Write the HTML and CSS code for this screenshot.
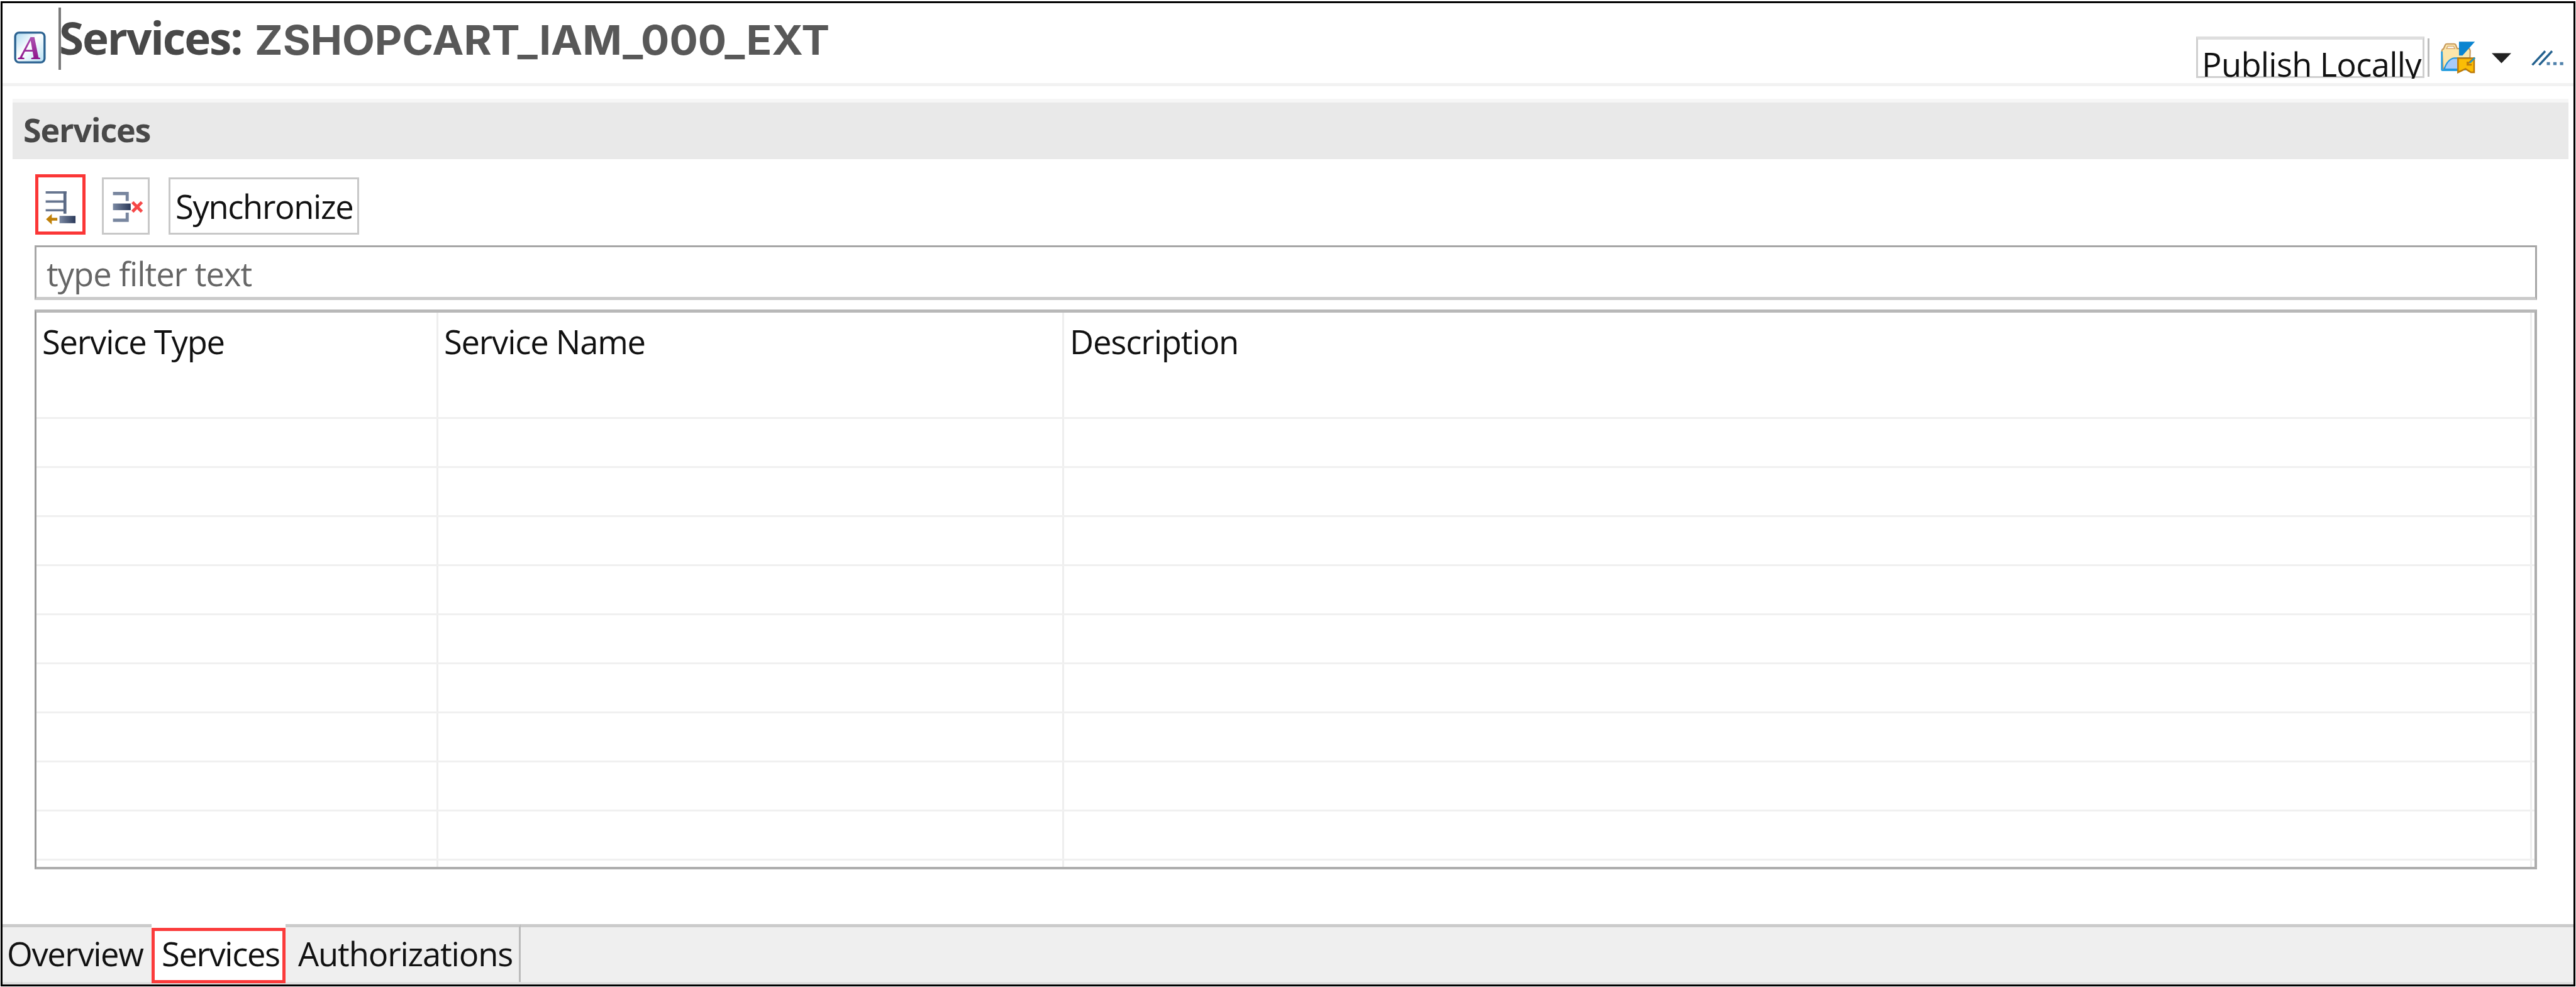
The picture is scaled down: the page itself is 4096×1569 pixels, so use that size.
FILE: index.html
```html
<!DOCTYPE html>
<html lang="en">
<head>
<meta charset="utf-8">
<title>Services: ZSHOPCART_IAM_000_EXT</title>
<link rel="stylesheet" href="styles.css">
</head>
<body>
<div class="frame">
  <header class="header">
    <svg class="app-icon" viewBox="70 158 164 166">
      <defs><linearGradient id="paper" x1="0" y1="0" x2="1" y2="1"><stop offset="0" stop-color="#a9d8f0"/><stop offset=".45" stop-color="#fff"/><stop offset="1" stop-color="#b5e0f3"/></linearGradient>
      <linearGradient id="ink" x1="0" y1="0" x2="0" y2="1"><stop offset="0" stop-color="#b56bc0"/><stop offset="1" stop-color="#86007f"/></linearGradient></defs>
      <rect x="76" y="164" width="152" height="154" rx="20" fill="url(#paper)" stroke="#2b6291" stroke-width="11"/>
      <text x="98" y="300" class="app-letter" fill="url(#ink)">A</text>
    </svg>
    <span class="caret"></span>
    <h1 class="title"><span class="title-label">Services:</span><span class="title-id">ZSHOPCART_IAM_000_EXT</span></h1>
    <div class="actions">
      <div class="publish" role="button"><span>Publish Locally</span></div>
      <span class="separator"></span>
      <svg class="folder" viewBox="155 62 175 163">
        <path d="M160 112 166 206Q167 210 172 210L300 208 304 112Z" fill="#35a3e0"/>
        <path d="M160 110 Q162 100 168 100L178 78Q180 74 186 74L222 74Q228 74 230 78L238 98 300 98 304 108 302 170 200 190 166 200Z" fill="#fbe6ab" stroke="#c79a5c" stroke-width="7"/>
        <path d="M184 98 190 86H220L226 98Z" fill="#fff" stroke="#d9ac72" stroke-width="5"/>
        <path d="M160 112V204Q160 208 166 208H250" fill="none" stroke="#2a9fdf" stroke-width="9"/>
        <path d="M172 202Q190 150 224 146H300L270 204Z" fill="#a9cbf8" stroke="#1f97e0" stroke-width="7"/>
        <path d="M247 63H328L265 133H247Z" fill="#0a84d0"/>
        <path d="M242 147H324V219L308 219 280 201 242 219Z" fill="#fbbd05" stroke="#bd7a08" stroke-width="8"/>
        <path d="M326 144 290 176M290 164V180H312" fill="none" stroke="#bd7a08" stroke-width="8"/>
        <path d="M328 144 302 170" stroke="#1f97c8" stroke-width="8"/>
      </svg>
      <svg class="drop" viewBox="0 0 31 16"><path d="M0 0H31L15.5 16Z" fill="#222"/></svg>
      <svg class="more" viewBox="612 105 170 75"><path d="M620 179 686 108M655 179 721 108" stroke="#25628f" stroke-width="11"/><path d="M694 164h16v15h-16zM727 164h17v15h-17zM761 164h17v15h-17z" fill="#4f81ab"/></svg>
    </div>
  </header>
  <main class="body">
    <h2 class="section">Services</h2>
    <div class="toolbar">
      <button class="tool tool-add">
        <svg viewBox="78 90 156 178" class="ic-add">
          <defs><linearGradient id="bar"><stop offset="0" stop-color="#7b89a3"/><stop offset="1" stop-color="#2b3a5a"/></linearGradient></defs>
          <path d="M80 96H186V108H80ZM80 142H172V154H80ZM80 187H172V198H80Z" fill="#66758f"/>
          <path d="M170 98H185V210H170Z" fill="#5a6984"/>
          <path d="M150 221H231V258H150Z" fill="url(#bar)"/>
          <path d="M82 238 111 211V231H139V245H111V265Z" fill="#c0810a"/>
        </svg>
      </button>
      <button class="tool tool-del">
        <svg viewBox="420 100 158 162" class="ic-del">
          <path d="M422 105H503V152H487V122H422ZM422 259H503V212H487V242H422Z" fill="#78869f"/>
          <path d="M422 165H513V199H422Z" fill="url(#bar)"/>
          <path d="M522 158 570 207M570 158 522 207" stroke="#f64848" stroke-width="16"/>
        </svg>
      </button>
      <button class="tool tool-sync"><span>Synchronize</span></button>
    </div>
    <div class="filter">type filter text</div>
    <div class="table">
      <div class="row head"><div>Service Type</div><div>Service Name</div><div class="head-desc">Description</div></div>
      <div class="row"><div></div><div></div><div></div></div>
      <div class="row"><div></div><div></div><div></div></div>
      <div class="row"><div></div><div></div><div></div></div>
      <div class="row"><div></div><div></div><div></div></div>
      <div class="row"><div></div><div></div><div></div></div>
      <div class="row"><div></div><div></div><div></div></div>
      <div class="row"><div></div><div></div><div></div></div>
      <div class="row"><div></div><div></div><div></div></div>
      <div class="row"><div></div><div></div><div></div></div>
      <div class="row last"><div></div><div></div><div></div></div>
    </div>
  </main>
  <nav class="tabs">
    <a class="tab tab-overview">Overview</a>
    <a class="tab-services">Services</a>
    <a class="tab tab-auth">Authorizations</a>
    <span class="tab tab-rest"></span>
  </nav>
</div>
</body>
</html>
```
FILE: styles.css
```css
* { box-sizing: border-box; }
body {
  margin: 0;
  background: #fff;
  font-family: "Open Sans", "Noto Sans", sans-serif;
  font-size: 52.5px;
  line-height: 72px;
  letter-spacing: -1.2px;
  color: #111;
}
h1, h2 { margin: 0; }
button { padding: 0; font: inherit; letter-spacing: inherit; color: inherit; background: #fff; border-radius: 0; }
svg { display: block; flex: none; }
span, a { white-space: nowrap; }

.frame {
  display: flex;
  flex-direction: column;
  height: 1566px;
  margin: 2px 1px 1px;
  border: 3px solid #000;
}

/* Title bar */
.header {
  display: flex;
  align-items: flex-start;
  height: 132px;
  padding: 0 15px 0 18px;
  border-bottom: 5px solid #f2f2f2;
}
.app-icon { width: 51px; height: 51px; margin-top: 45px; overflow: visible; }
.app-letter { font: italic bold 172px "Liberation Serif", serif; letter-spacing: 0; }
.caret { width: 4px; height: 99px; margin: 7px 0 0 20px; background: #7a7a7a; }
.title {
  display: flex;
  align-items: baseline;
  margin: 5px 0 0 -3px;
  line-height: 100px;
  font-weight: 700;
}
.title-label { font-size: 71px; letter-spacing: -2.1px; color: #484848; }
.title-id {
  margin-left: 21px;
  font-family: Inter, sans-serif;
  font-size: 65px;
  letter-spacing: 0;
  color: #585858;
  transform: scaleX(1.035);
  transform-origin: left;
}
.actions { display: flex; align-items: flex-start; margin-left: auto; }
.publish {
  width: 363px;
  height: 66px;
  margin-top: 53px;
  padding: 3px 0 0 6px;
  overflow: clip;
  overflow-clip-margin: 4px;
  letter-spacing: -.7px;
  border: 3px solid #cfcfcf;
  border-top: 5px solid #dedede;
}
.separator { width: 3px; height: 61px; margin: 56px 0 0 5px; background: #bdbdbd; }
.folder { width: 55px; height: 51px; margin: 61px 0 0 18px; }
.drop { width: 31px; height: 17px; margin: 79px 0 0 26px; }
.more { width: 53px; height: 24px; margin: 75px 0 0 31px; }

/* Services section */
.body { flex: 1; padding: 20px 58px 0 51px; }
.section {
  height: 96px;
  margin: 0 -50px 0 -35px;
  padding: 7px 0 0 17px;
  border-top: 6px solid #f6f6f6;
  background: #e9e9e9;
  font-size: 52px;
  letter-spacing: -1.2px;
  color: #484848;
}
.toolbar { display: flex; align-items: flex-end; height: 120px; }
.tool { display: flex; align-items: flex-start; height: 91px; border: 3px solid #c8c8c8; }
.tool-add { width: 80px; height: 96px; margin-left: 1px; padding: 20px 0 0 11px; border: 5px solid #fb3636; }
.ic-add { width: 49px; height: 56px; }
.tool-del { width: 76px; margin-left: 26px; padding: 18px 0 0 14px; }
.ic-del { width: 49px; height: 51px; }
.tool-sync { width: 303px; margin-left: 30px; padding: 7px 0 0 8px; letter-spacing: -1.35px; }
.filter {
  height: 87px;
  margin-top: 17px;
  padding: 6px 0 0 16px;
  border: 3px solid #a6a6a6;
  border-bottom: 5px solid #cacaca;
  letter-spacing: -1px;
  color: #666;
}
.table {
  height: 890px;
  margin-top: 15px;
  overflow: hidden;
  border: solid;
  border-width: 5px 4px 4px 3px;
  border-color: #b8b8b8 #adadad #adadad #999;
}
.row { display: grid; grid-template-columns: 639px 995px 2334px; height: 78px; border-bottom: 3px solid #f0f0f0; }
.row div { border-right: 3px solid #eee; }
.head { height: 169px; }
.head div { padding: 10px 0 0 9px; }
.head .head-desc { letter-spacing: -1.1px; }
.last { border: 0; }

/* Page tabs */
.tabs { display: flex; height: 96px; background: #efefef; border-bottom: 4px solid #dfdfdf; }
.tab { padding-top: 6px; border-top: 5px solid #cbcbcb; }
.tab-overview { width: 237px; padding-left: 7px; letter-spacing: -1.4px; }
.tab-services {
  width: 213px;
  margin: 6px 0 -2px;
  padding-left: 11px;
  border: 5px solid #fb3b3b;
  box-shadow: 0 -6px 0 #fff;
  background: #fff;
  letter-spacing: -1.4px;
}
.tab-auth { width: 374px; padding-left: 20px; border-right: 3px solid #bbb; letter-spacing: -1.15px; }
.tab-rest { flex: 1; }
```
